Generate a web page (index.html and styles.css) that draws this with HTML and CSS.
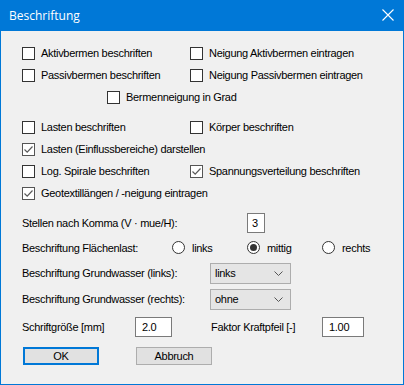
FILE: index.html
```html
<!DOCTYPE html>
<html>
<head>
<meta charset="utf-8">
<link rel="stylesheet" href="styles.css">
</head>
<body>
<div class="window">
  <div class="titlebar">
    <span class="title">Beschriftung</span>
    <svg class="close" width="12" height="12" viewBox="0 0 12 12"><path d="M0.5 0.5 L11.5 11.5 M11.5 0.5 L0.5 11.5" stroke="#fff" stroke-width="1.1" fill="none"/></svg>
  </div>
  <div class="content">
    <div class="group g1">
      <div class="row2">
        <label class="cb col"><span class="box"></span>Aktivbermen beschriften</label>
        <label class="cb"><span class="box"></span>Neigung Aktivbermen eintragen</label>
      </div>
      <div class="row2">
        <label class="cb col"><span class="box"></span>Passivbermen beschriften</label>
        <label class="cb"><span class="box"></span>Neigung Passivbermen eintragen</label>
      </div>
      <div class="row2 indent">
        <label class="cb"><span class="box"></span>Bermenneigung in Grad</label>
      </div>
    </div>
    <div class="group g2">
      <div class="row2">
        <label class="cb col"><span class="box"></span>Lasten beschriften</label>
        <label class="cb"><span class="box"></span>Körper beschriften</label>
      </div>
      <div class="row2">
        <label class="cb"><span class="box checked"><svg width="11" height="11" viewBox="0 0 11 11"><path d="M1.5 5.5 L4.2 8.2 L9.5 2.5" stroke="#5a5a5a" stroke-width="1.2" fill="none"/></svg></span>Lasten (Einflussbereiche) darstellen</label>
      </div>
      <div class="row2">
        <label class="cb col"><span class="box"></span>Log. Spirale beschriften</label>
        <label class="cb"><span class="box checked"><svg width="11" height="11" viewBox="0 0 11 11"><path d="M1.5 5.5 L4.2 8.2 L9.5 2.5" stroke="#5a5a5a" stroke-width="1.2" fill="none"/></svg></span>Spannungsverteilung beschriften</label>
      </div>
      <div class="row2">
        <label class="cb"><span class="box checked"><svg width="11" height="11" viewBox="0 0 11 11"><path d="M1.5 5.5 L4.2 8.2 L9.5 2.5" stroke="#5a5a5a" stroke-width="1.2" fill="none"/></svg></span>Geotextillängen / -neigung eintragen</label>
      </div>
    </div>
    <div class="form">
      <div class="frow r-stellen">
        <span class="lbl w225">Stellen nach Komma (V · mue/H):</span>
        <span class="edit small">3</span>
      </div>
      <div class="frow r-radio">
        <span class="lbl w150">Beschriftung Flächenlast:</span>
        <label class="rb"><span class="circle"></span>links</label>
        <label class="rb"><span class="circle on"></span>mittig</label>
        <label class="rb"><span class="circle"></span>rechts</label>
      </div>
      <div class="frow r-sel1">
        <span class="lbl w188">Beschriftung Grundwasser (links):</span>
        <span class="select">links<svg class="chev" width="9" height="5" viewBox="0 0 9 5"><path d="M0.5 0.5 L4.5 4.5 L8.5 0.5" stroke="#555" stroke-width="1" fill="none"/></svg></span>
      </div>
      <div class="frow r-sel2">
        <span class="lbl w188">Beschriftung Grundwasser (rechts):</span>
        <span class="select">ohne<svg class="chev" width="9" height="5" viewBox="0 0 9 5"><path d="M0.5 0.5 L4.5 4.5 L8.5 0.5" stroke="#555" stroke-width="1" fill="none"/></svg></span>
      </div>
      <div class="frow r-size">
        <span class="lbl w113">Schriftgröße [mm]</span>
        <span class="edit e36">2.0</span>
        <span class="lbl faktor">Faktor Kraftpfeil [-]</span>
        <span class="edit e42">1.00</span>
      </div>
      <div class="frow r-btn">
        <span class="btn default">OK</span>
        <span class="btn">Abbruch</span>
      </div>
    </div>
  </div>
</div>
</body>
</html>
```
FILE: styles.css
```css
* { box-sizing: border-box; }
html, body { margin: 0; padding: 0; }
body {
  font-family: "Liberation Sans", Arial, sans-serif;
  font-size: 11px;
  letter-spacing: -0.3px;
  color: #000;
  background: #f0f0f0;
}
.window {
  width: 404px;
  height: 385px;
  border: 1px solid #0078d7;
  border-top: none;
  background: #f0f0f0;
}
.titlebar {
  height: 31px;
  background: #0078d7;
  display: flex;
  align-items: center;
  justify-content: space-between;
  padding: 0 10px 0 8px;
  margin: 0 -1px;
}
.title {
  font-family: "Open Sans", "Noto Sans", sans-serif;
  font-size: 12px;
  letter-spacing: 0;
  color: #fff;
  padding-left: 1px;
  padding-bottom: 1px;
}
.close { display: block; margin-top: -1px; }
.content { padding: 11px 0 0 21px; }
.group { display: flex; flex-direction: column; }
.g2 { margin-top: 8px; }
.row2 { height: 22px; display: flex; align-items: center; }
.indent { padding-left: 85px; }
.cb { display: flex; align-items: center; white-space: nowrap; }
.cb.col { width: 168px; }
.box {
  width: 13px;
  height: 13px;
  border: 1px solid #333;
  background: #fff;
  margin-right: 6px;
  display: flex;
  align-items: center;
  justify-content: center;
  flex: none;
}
.box.checked { border-color: #555; }
.box svg { display: block; }
.form { display: flex; flex-direction: column; margin-top: 8px; }
.frow { display: flex; align-items: center; }
.r-stellen { height: 22px; }
.r-radio { height: 23px; margin-top: 2px; }
.r-sel1 { height: 22px; margin-top: 3px; }
.r-sel2 { height: 22px; margin-top: 4px; }
.r-size { height: 23px; margin-top: 5px; }
.r-btn { height: 21px; margin-top: 7px; padding-left: 1px; }
.lbl { white-space: nowrap; flex: none; }
.w225 { width: 225px; }
.w150 { width: 150px; }
.w188 { width: 188px; }
.w113 { width: 113px; }
.faktor { margin-left: 39px; width: 111px; }
.edit {
  height: 20px;
  background: #fff;
  border: 1px solid #7a7a7a;
  display: flex;
  align-items: center;
  padding-left: 6px;
  flex: none;
}
.edit.small { width: 18px; padding-left: 4px; }
.e36 { width: 37px; }
.e42 { width: 42px; }
.rb { display: flex; align-items: center; width: 75px; }
.circle {
  width: 13px;
  height: 13px;
  border: 1px solid #333;
  border-radius: 50%;
  background: #fff;
  margin-right: 7px;
  display: flex;
  align-items: center;
  justify-content: center;
  flex: none;
}
.circle.on::after {
  content: "";
  width: 7px;
  height: 7px;
  border-radius: 50%;
  background: #333;
}
.select {
  width: 81px;
  height: 21px;
  background: #e5e5e5;
  border: 1px solid #adadad;
  display: flex;
  align-items: center;
  justify-content: space-between;
  padding: 0 4px 0 4px;
}
.chev { display: block; margin-right: 3px; }
.btn {
  width: 76px;
  height: 18px;
  background: #e1e1e1;
  border: 1px solid #adadad;
  display: flex;
  align-items: center;
  justify-content: center;
}
.btn.default { border: 2px solid #0078d7; margin-right: 37px; }
```
